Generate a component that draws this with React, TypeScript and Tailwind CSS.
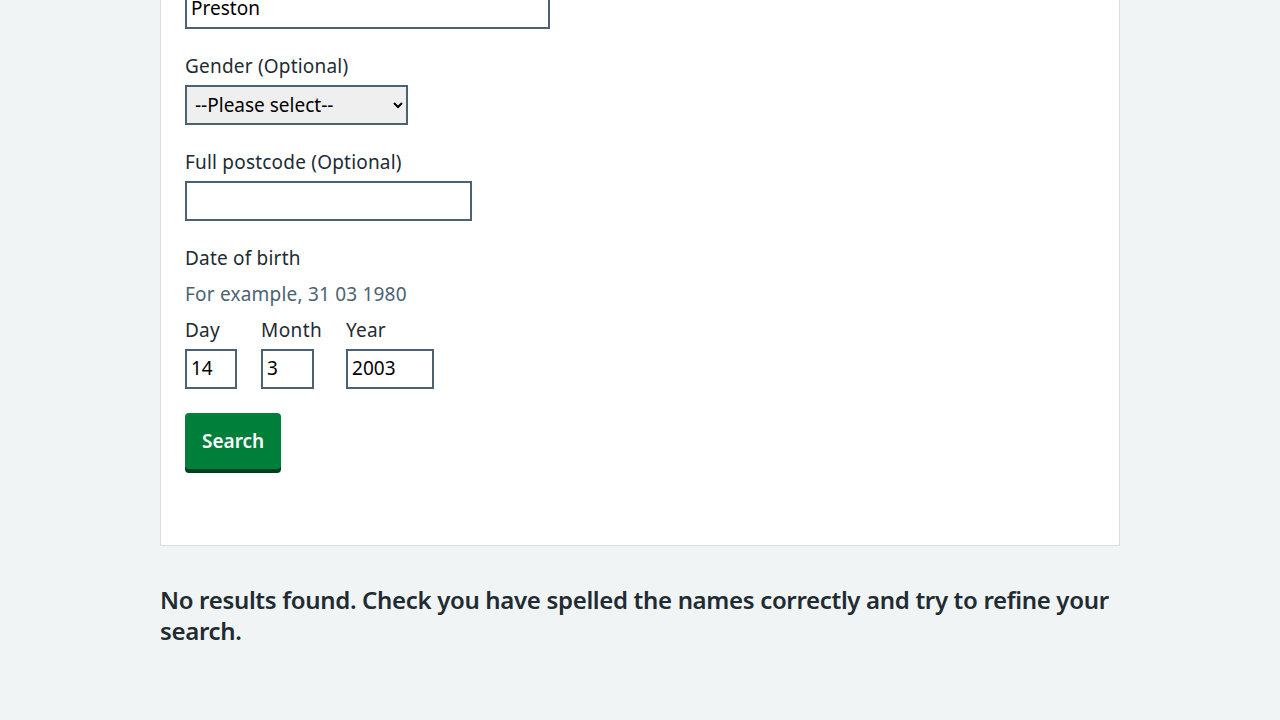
import React from "react";

const font = { fontFamily: '"Noto Sans", "Liberation Sans", sans-serif' };

function Label({ children }: { children: React.ReactNode }) {
  return <label className="block text-[19px] leading-[26px] tracking-[0.2px] text-[#212b32] mb-[6px]">{children}</label>;
}

export default function App() {
  return (
    <div className="min-h-[720px] bg-[#f0f4f5] overflow-hidden" style={font}>
      <div className="w-[960px] mx-auto">
        <div className="-mt-[11px] bg-white border border-t-0 border-[#d8dde0] pl-6 pr-6 pb-[76px]">
          <input
            readOnly
            value="Preston"
            className="block w-[365px] h-10 border-2 border-[#4c6272] px-1 pb-[2px] text-[19px] text-black outline-none"
            style={font}
          />
          <div className="mt-6">
            <Label>Gender (Optional)</Label>
            <select
              className="block w-[223px] h-10 border-2 border-[#4c6272] bg-[#efefef] px-1 text-[19px] text-black outline-none"
              style={font}
            >
              <option>--Please select--</option>
            </select>
          </div>
          <div className="mt-6">
            <Label>Full postcode (Optional)</Label>
            <input
              readOnly
              className="block w-[287px] h-10 border-2 border-[#4c6272] px-1 pb-[2px] text-[19px] text-black outline-none"
            />
          </div>
          <div className="mt-6">
            <div className="text-[19px] leading-[26px] tracking-[0.2px] text-[#212b32]">Date of birth</div>
            <div className="text-[19px] leading-[28px] tracking-[0.2px] text-[#4c6272] mt-[9px]">For example, 31 03 1980</div>
            <div className="flex mt-[9px]">
              {[
                ["Day", "14", "w-[52px]", "tracking-[0.2px]"],
                ["Month", "3", "w-[53px]", "tracking-[0.4px]"],
                ["Year", "2003", "w-[88px]", "tracking-[0.2px]"],
              ].map(([l, v, w, t]) => (
                <div key={l} className="mr-6">
                  <label className={`block text-[19px] leading-[26px] ${t} text-[#212b32] mb-[6px]`}>{l}</label>
                  <input
                    readOnly
                    value={v}
                    className={`block ${w} h-10 border-2 border-[#4c6272] px-1 pb-[2px] text-[19px] text-black outline-none`}
                    style={font}
                  />
                </div>
              ))}
            </div>
          </div>
          <button
            className="mt-6 h-14 px-[17px] rounded bg-[#007f3b] text-white text-[19px] font-semibold shadow-[0_4px_0_#00401e]"
            style={font}
          >
            Search
          </button>
        </div>
        <h2 className="mt-[38px] text-[24px] leading-[31px] tracking-[-0.33px] font-semibold text-[#212b32]">
          No results found. Check you have spelled the names correctly and try to refine your search.
        </h2>
      </div>
    </div>
  );
}
